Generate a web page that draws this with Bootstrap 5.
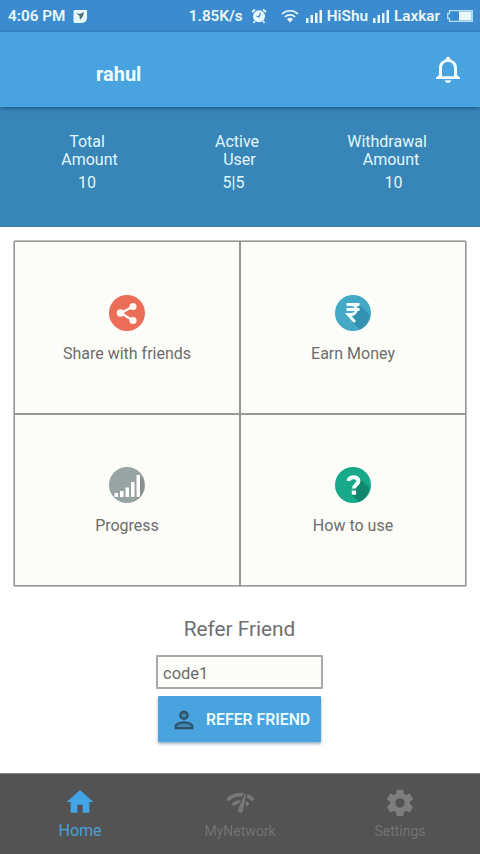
<!DOCTYPE html>
<html lang="en">
<head>
<meta charset="utf-8">
<meta name="viewport" content="width=device-width, initial-scale=1">
<title>Refer Friend</title>
<link href="https://cdn.jsdelivr.net/npm/bootstrap@5.3.0/dist/css/bootstrap.min.css" rel="stylesheet">
<style>
body{font-family:Roboto,"Liberation Sans",sans-serif;background:#fff;height:854px;overflow:hidden;line-height:1.2}
svg{display:block;flex:none}
.status-bar{height:32px;background:#3b8bce;color:#e9f8fb;font-size:15.3px;font-weight:600;padding:0 7px 0 8px;white-space:nowrap}
.app-bar{height:75px;background:#48a3df;color:#f0fcff;padding:9px 20px 0 96px;position:relative;z-index:1;box-shadow:0 1px 4px rgba(0,30,60,.5)}
.app-title{font-size:20px;font-weight:700}
.stats{height:120px;background:#3885b8;color:#e0f7fc;font-size:16px;line-height:18px;padding:26px 18px 0 12px;border-bottom:1px solid #3f7ba9}
.stats .figure-line{margin-top:5px}
.nudge-r{padding-left:5px}.nudge-l{padding-right:7px}.nudge-x{padding-left:13px}
.gap-wifi{margin-left:14px}.gap-signal{margin-left:7px}.gap-sim{margin-left:5px}
.bell{margin-bottom:9px}
.tiles{margin:13px 13px 0;height:347px;border:1px solid #c0c1bf;border-radius:2px}
.tile{height:172.5px;background:#fcfdf8;border:1px solid #979896;color:#6c6c6c;font-size:16px;gap:12px;padding-top:2px}
.refer-title{font-size:20.8px;color:#6f6f6f;margin-top:29px;line-height:26px}
.refer-block{padding-right:1px}
.code-input{width:167px;height:34px;border:2px solid #a9a9a9;border-radius:1px;background:#fcfdf8;color:#6c6c6c;font-size:16.5px;padding:2px 5px 0;margin-top:13px}
.refer-btn{width:163px;height:46px;background:#48a3df;color:#e9fbff;font-size:15.8px;font-weight:600;border:0;border-radius:1px;margin-top:7px;padding:2px 0 0 12px;gap:8px;white-space:nowrap;box-shadow:0 2px 3px rgba(40,80,130,.45)}
.bottom-nav{height:81px;background:#535353;color:#727272;font-size:14px;border-top:1px solid #858585}
.bottom-nav a{color:inherit;padding-top:13px;gap:5px}
.bottom-nav a.current{color:#499fd8;font-size:16px;padding-top:12px;gap:3px}
.bottom-nav a.settings-link{gap:4px}
.bottom-nav .current path{fill:#42a5e8}
</style>
</head>
<body class="d-flex flex-column">
<header>
  <div class="status-bar d-flex align-items-center">
    <span>4:06 PM</span>
    <svg class="ms-2" width="15" height="15" viewBox="0 0 15 15"><path fill="#e9f8fb" d="M2 1h12v8a5 5 0 0 1-5 5H2a1.500 1.500 0 0 1-1.500-1.500v-10A1.500 1.500 0 0 1 2 1z"/><path fill="#4b7075" d="M3 4l4 1 4-2-1 4-3 4-.5-4z"/></svg>
    <span class="ms-auto">1.85K/s</span>
    <svg class="ms-2" width="16" height="16" viewBox="0 0 16 16"><g fill="none" stroke="#e9f8fb" stroke-width="1.700"><path d="M1 4l3-2.500M15 4l-3-2.500M4 13l-1.500 2M12 13l1.500 2"/></g><circle cx="8" cy="8.300" r="6" fill="#e9f8fb"/><path d="M9.500 5L8 9 5.500 8" fill="none" stroke="#3b8bce" stroke-width="1.300"/></svg>
    <svg class="gap-wifi" width="18" height="14" viewBox="0 0 18 14"><g fill="none" stroke="#e9f8fb" stroke-width="1.700"><path d="M1 5a11.500 11.500 0 0 1 16 0M3.800 8a7.600 7.600 0 0 1 10.400 0"/></g><path fill="#e9f8fb" d="M6 10.200a4.500 4.500 0 0 1 6 0L9 13.500z"/></svg>
    <svg class="gap-signal" width="17" height="14" viewBox="0 0 17 14"><path fill="#e9f8fb" d="M0 9h2.500v5H0zM4.500 6H7v8H4.500zM9 4h2.500v10H9zM13.500 1H16v13h-2.500z"/></svg>
    <span class="ms-1">HiShu</span>
    <svg class="gap-sim" width="17" height="14" viewBox="0 0 17 14"><path fill="#e9f8fb" d="M0 9h2.500v5H0zM4.500 6H7v8H4.500zM9 4h2.500v10H9zM13.500 1H16v13h-2.500z"/></svg>
    <span class="ms-1">Laxkar</span>
    <svg class="gap-signal" width="26" height="12" viewBox="0 0 26 12"><path fill="none" stroke="#b8dff2" stroke-width="1.300" d="M2.500.7h22.800v10.600H2.500V8.500H.7v-5h1.800z"/><path fill="#e9f8fb" d="M12 1.500h12.500v9H12z"/></svg>
  </div>
  <div class="app-bar d-flex align-items-center justify-content-between">
    <span class="app-title">rahul</span>
    <svg class="bell" width="24" height="27" viewBox="4 2 16 20" preserveAspectRatio="none"><path fill="#f2fdff" d="M12 22c1.100 0 2-.9 2-2h-4c0 1.100.9 2 2 2zm6-6v-5c0-3.070-1.630-5.640-4.500-6.320V4c0-.83-.67-1.500-1.500-1.500s-1.500.67-1.500 1.500v.68C7.640 5.360 6 7.920 6 11v5l-2 2v1h16v-1l-2-2zm-2 1H8v-6c0-2.480 1.510-4.500 4-4.500s4 2.020 4 4.500v6z"/></svg>
  </div>
</header>
<section class="stats d-flex text-center">
  <div class="flex-fill w-100"><div>Total</div><div class="nudge-r">Amount</div><div class="figure-line">10</div></div>
  <div class="flex-fill w-100"><div>Active</div><div class="nudge-r">User</div><div class="figure-line nudge-l">5|5</div></div>
  <div class="flex-fill w-100"><div>Withdrawal</div><div class="ps-2">Amount</div><div class="figure-line nudge-x">10</div></div>
</section>
<main>
  <div class="tiles row g-0">
    <div class="col-6 tile d-flex flex-column align-items-center justify-content-center">
      <svg width="38" height="38" viewBox="0 0 38 38"><circle cx="19" cy="19" r="18" fill="#ec6d57"/><path d="M25 12.500L13 19l12 7.500" fill="none" stroke="#fff8f3" stroke-width="2.500"/><g fill="#fff8f3"><circle cx="25" cy="12.500" r="3.600"/><circle cx="12.500" cy="19" r="3.800"/><circle cx="25" cy="26.500" r="3.600"/></g></svg>
      <span>Share with friends</span>
    </div>
    <div class="col-6 tile d-flex flex-column align-items-center justify-content-center">
      <svg width="38" height="38" viewBox="0 0 38 38"><circle cx="19" cy="19" r="18" fill="#43a9c7"/><path d="M25 10l10.500 11A18 18 0 0 1 26 35.500L18 28z" fill="#3490b0"/><path d="M12.500 10.500h13M12.500 15.500h13M13 10.500h4c7 0 7 10 0 10h-3l7 7.500" fill="none" stroke="#f4ffff" stroke-width="2.800"/></svg>
      <span>Earn Money</span>
    </div>
    <div class="col-6 tile d-flex flex-column align-items-center justify-content-center">
      <svg width="38" height="38" viewBox="0 0 38 38"><circle cx="19" cy="19" r="18" fill="#98a3a3"/><path d="M33 9.500a18 18 0 0 1-2 23L27 31z" fill="#879090"/><path fill="#fff" d="M6.500 27h3.500v4H6.500zM12 25h3.500v6H12zM17.500 21.500H21V31h-3.500zM23 16h3.500v15H23zM28.500 9H32v22h-3.500z"/></svg>
      <span>Progress</span>
    </div>
    <div class="col-6 tile d-flex flex-column align-items-center justify-content-center">
      <svg width="38" height="38" viewBox="0 0 38 38"><circle cx="19" cy="19" r="18" fill="#17a98a"/><path d="M25 12l10.500 10A18 18 0 0 1 25 36l-7-7z" fill="#11866e"/><path d="M14.500 15c.5-5 10-5 10 0 0 3.500-4.500 3.500-4.500 7.500" fill="none" stroke="#f3fffc" stroke-width="4"/><path d="M17.800 24.500h4.300v4.200h-4.300z" fill="#f3fffc"/></svg>
      <span>How to use</span>
    </div>
  </div>
  <div class="refer-block d-flex flex-column align-items-center">
    <h1 class="refer-title fw-normal mb-0">Refer Friend</h1>
    <input class="code-input" type="text" value="code1" aria-label="Referral code">
    <button class="btn refer-btn d-flex align-items-center" type="button">
      <svg width="28" height="28" viewBox="0 0 24 24"><path d="M12 4a4 4 0 1 1 0 8 4 4 0 0 1 0-8zM4 20v-2c0-2.660 5.330-4 8-4s8 1.340 8 4v2z" fill="#3d87b5"/><path fill="#31526a" d="M12 5.900c1.160 0 2.100.94 2.100 2.100s-.94 2.100-2.100 2.100S9.900 9.160 9.900 8s.94-2.100 2.100-2.100m0 9c2.970 0 6.100 1.460 6.100 2.100v1.100H5.900V17c0-.64 3.130-2.100 6.100-2.100M12 4C9.790 4 8 5.790 8 8s1.790 4 4 4 4-1.790 4-4-1.790-4-4-4zm0 9c-2.670 0-8 1.340-8 4v3h16v-3c0-2.660-5.330-4-8-4z"/></svg>
      <span>REFER FRIEND</span>
    </button>
  </div>
</main>
<nav class="bottom-nav d-flex mt-auto">
  <a class="current flex-fill w-100 text-decoration-none d-flex flex-column align-items-center" href="#"><svg width="32" height="32" viewBox="0 0 24 24" preserveAspectRatio="none"><path d="M10 20v-6h4v6h5v-8h3L12 3 2 12h3v8z"/></svg><span>Home</span></a>
  <a class="flex-fill w-100 text-decoration-none d-flex flex-column align-items-center" href="#"><svg width="31" height="31" viewBox="0 0 24 24" fill="#777"><path d="M15.900 5c-.17 0-.32.09-.41.23l-.07.15-5.180 11.650c-.16.29-.26.61-.26.96 0 1.110.9 2.010 2.010 2.010.96 0 1.770-.68 1.960-1.590l.01-.03L16.400 5.500c0-.28-.22-.5-.5-.5zM1 9l2 2c2.880-2.880 6.790-4.080 10.530-3.620l1.190-2.680C9.890 3.840 4.740 5.270 1 9zm20 2l2-2c-1.640-1.640-3.550-2.820-5.590-3.570l-.53 2.820c1.500.62 2.900 1.530 4.120 2.750zm-4 4l2-2c-.8-.8-1.700-1.420-2.660-1.890l-.55 2.920c.42.27.83.59 1.210.97zM5 13l2 2c1.130-1.130 2.560-1.790 4.030-2l1.280-2.880c-2.630-.08-5.300.87-7.310 2.880z"/></svg><span>MyNetwork</span></a>
  <a class="settings-link flex-fill w-100 text-decoration-none d-flex flex-column align-items-center" href="#"><svg width="32" height="32" viewBox="0 0 24 24" fill="#7d7d7d"><path d="M19.430 12.980c.04-.32.07-.64.07-.98s-.03-.66-.07-.98l2.110-1.650c.19-.15.24-.42.12-.64l-2-3.460c-.12-.22-.39-.3-.61-.22l-2.490 1c-.52-.4-1.080-.73-1.690-.98l-.38-2.650C14.460 2.180 14.250 2 14 2h-4c-.25 0-.46.18-.49.42l-.38 2.650c-.61.25-1.170.59-1.690.98l-2.490-1c-.23-.09-.49 0-.61.22l-2 3.460c-.13.22-.07.49.12.64l2.110 1.650c-.04.32-.07.65-.07.98s.03.66.07.98l-2.110 1.650c-.19.15-.24.42-.12.64l2 3.460c.12.22.39.3.61.22l2.490-1c.52.4 1.080.73 1.690.98l.38 2.650c.03.24.24.42.49.42h4c.25 0 .46-.18.49-.42l.38-2.650c.61-.25 1.170-.59 1.690-.98l2.490 1c.23.09.49 0 .61-.22l2-3.460c.12-.22.07-.49-.12-.64zM12 15.500c-1.930 0-3.500-1.570-3.500-3.500s1.570-3.500 3.500-3.500 3.500 1.570 3.500 3.500-1.570 3.500-3.500 3.500z"/></svg><span>Settings</span></a>
</nav>
<script src="https://cdn.jsdelivr.net/npm/bootstrap@5.3.0/dist/js/bootstrap.bundle.min.js"></script>
</body>
</html>
